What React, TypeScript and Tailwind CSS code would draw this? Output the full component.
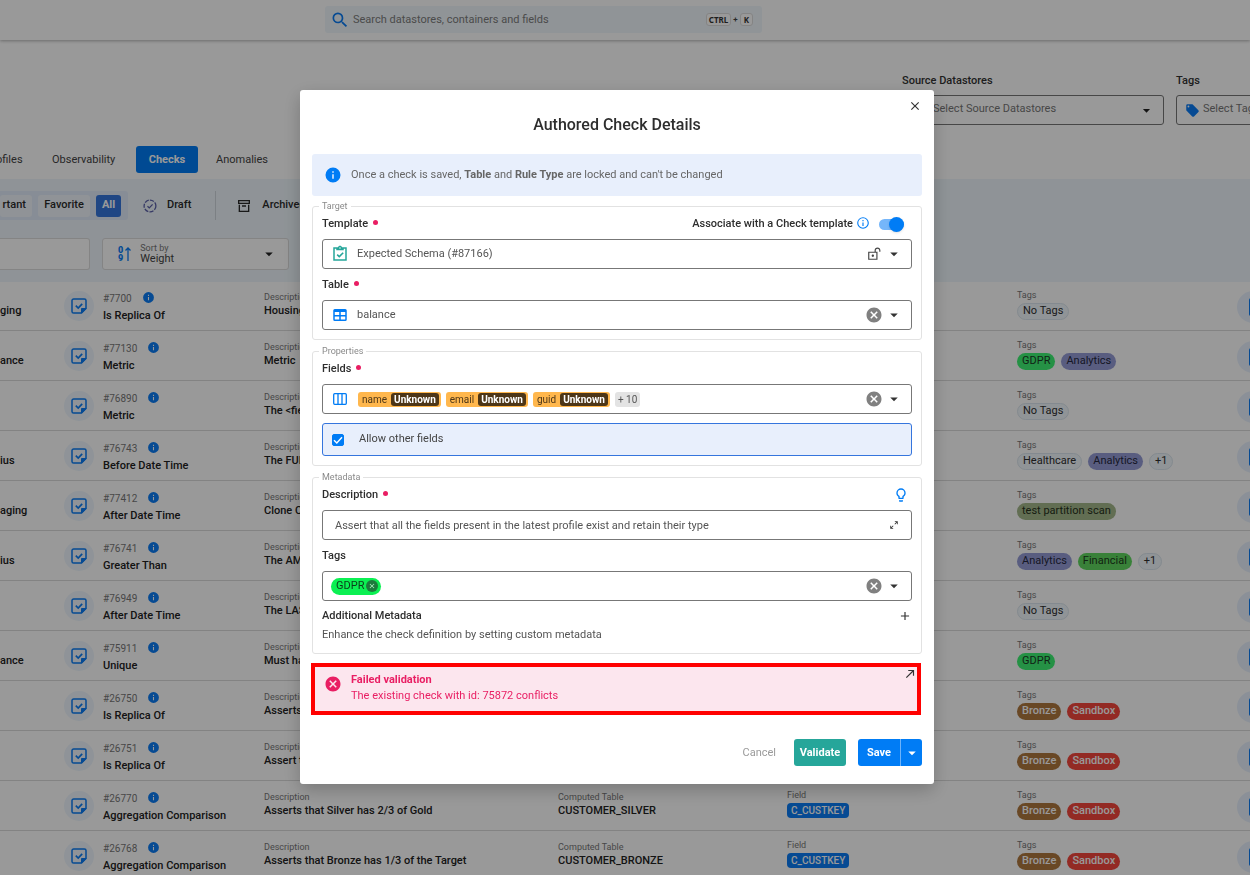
import React, { useState } from "react";

const paths = {
  caret: "M7,10L12,15L17,10H7Z",
  magnify:
    "M9.5,3A6.5,6.5 0 0,1 16,9.5C16,11.11 15.41,12.59 14.44,13.73L14.71,14H15.5L20.5,19L19,20.5L14,15.5V14.71L13.73,14.44C12.59,15.41 11.11,16 9.5,16A6.5,6.5 0 0,1 3,9.5A6.5,6.5 0 0,1 9.5,3M9.5,5C7,5 5,7 5,9.5C5,12 7,14 9.5,14C12,14 14,12 14,9.5C14,7 12,5 9.5,5Z",
  info: "M13,9H11V7H13M13,17H11V11H13M12,2A10,10 0 0,0 2,12A10,10 0 0,0 12,22A10,10 0 0,0 22,12A10,10 0 0,0 12,2Z",
  infoOutline:
    "M11,9H13V7H11M12,20C7.59,20 4,16.41 4,12C4,7.59 7.59,4 12,4C16.41,4 20,7.59 20,12C20,16.41 16.41,20 12,20M12,2A10,10 0 0,0 2,12A10,10 0 0,0 12,22A10,10 0 0,0 22,12A10,10 0 0,0 12,2M11,17H13V11H11V17Z",
  close:
    "M19,6.41L17.59,5L12,10.59L6.41,5L5,6.41L10.59,12L5,17.59L6.41,19L12,13.41L17.59,19L19,17.59L13.41,12L19,6.41Z",
  closeCircle:
    "M12,2C17.53,2 22,6.47 22,12C22,17.53 17.53,22 12,22C6.47,22 2,17.53 2,12C2,6.47 6.47,2 12,2M15.59,7L12,10.59L8.41,7L7,8.41L10.59,12L7,15.59L8.41,17L12,13.41L15.59,17L17,15.59L13.41,12L17,8.41L15.59,7Z",
  table:
    "M5,4H19A2,2 0 0,1 21,6V18A2,2 0 0,1 19,20H5A2,2 0 0,1 3,18V6A2,2 0 0,1 5,4M5,8V12H11V8H5M13,8V12H19V8H13M5,14V18H11V14H5M13,14V18H19V14H13Z",
  lockOpen:
    "M18 1C15.24 1 13 3.24 13 6V8H2V22H18V8H15V6C15 4.34 16.34 3 18 3C19.66 3 21 4.34 21 6V8H23V6C23 3.24 20.76 1 18 1M10 13C11.1 13 12 13.89 12 15C12 16.11 11.11 17 10 17C8.9 17 8 16.11 8 15C8 13.9 8.9 13 10 13M16 10V20H4V10H16Z",
  clipboard:
    "M21,3H14.82C14.4,1.84 13.3,1 12,1C10.7,1 9.6,1.84 9.18,3H3V21H21V3M12,3A1,1 0 0,1 13,4A1,1 0 0,1 12,5A1,1 0 0,1 11,4A1,1 0 0,1 12,3M7,7H17V5H19V19H5V5H7V7M7.5,13.5L9,12L11,14L15.5,9.5L17,11L11,17L7.5,13.5Z",
  bulb: "M12,2A7,7 0 0,1 19,9C19,11.38 17.81,13.47 16,14.74V17A1,1 0 0,1 15,18H9A1,1 0 0,1 8,17V14.74C6.19,13.47 5,11.38 5,9A7,7 0 0,1 12,2M9,21V20H15V21A1,1 0 0,1 14,22H10A1,1 0 0,1 9,21M12,4A5,5 0 0,0 7,9C7,11.05 8.23,12.81 10,13.58V16H14V13.58C15.77,12.81 17,11.05 17,9A5,5 0 0,0 12,4Z",
  plus: "M19,13H13V19H11V13H5V11H11V5H13V11H19V13Z",
  expand:
    "M10,21V19H6.41L10.91,14.5L9.5,13.09L5,17.59V14H3V21H10M14.5,10.91L19,6.41V10H21V3H14V5H17.59L13.09,9.5L14.5,10.91Z",
  arrowTopRight: "M5,17.59L15.59,7H9V5H19V15H17V8.41L6.41,19L5,17.59Z",
  archive:
    "M20 21H4V10H6V19H18V10H20V21M3 3H21V9H3V3M9.5 11H14.5C14.78 11 15 11.22 15 11.5V13H9V11.5C9 11.22 9.22 11 9.5 11M5 5V7H19V5H5Z",
  tag: "M5.5,7A1.5,1.5 0 0,1 4,5.5A1.5,1.5 0 0,1 5.5,4A1.5,1.5 0 0,1 7,5.5A1.5,1.5 0 0,1 5.5,7M21.41,11.58L12.41,2.58C12.05,2.22 11.55,2 11,2H4C2.89,2 2,2.89 2,4V11C2,11.55 2.22,12.05 2.59,12.41L11.58,21.41C11.95,21.77 12.45,22 13,22C13.55,22 14.05,21.77 14.41,21.41L21.41,14.41C21.78,14.05 22,13.55 22,13C22,12.44 21.77,11.94 21.41,11.58Z",
};

function Icon({ name, className }: { name: keyof typeof paths; className: string }) {
  return (
    <svg viewBox="0 0 24 24" fill="currentColor" aria-hidden="true" className={`shrink-0 ${className}`}>
      <path d={paths[name]} />
    </svg>
  );
}

function CheckNoteIcon() {
  return (
    <svg viewBox="0 0 16 16" fill="none" stroke="currentColor" strokeWidth="1.5" aria-hidden="true" className="size-4">
      <path d="M10.5 15H2.6A1.6 1.6 0 0 1 1 13.4V2.6A1.6 1.6 0 0 1 2.6 1H13.4A1.6 1.6 0 0 1 15 2.6V10.5Z" />
      <path d="M10.5 15V10.5H15Z" fill="currentColor" strokeWidth="1" />
      <path d="M4.8 7.7L7.2 10L11.2 5.8" strokeWidth="1.7" />
    </svg>
  );
}

function ColumnsIcon() {
  return (
    <svg viewBox="0 0 14 12" fill="none" stroke="currentColor" strokeWidth="1.3" aria-hidden="true" className="h-3 w-3.5 shrink-0">
      <rect x="0.7" y="0.7" width="12.6" height="10.6" rx="1" />
      <path d="M5 1V11M9 1V11" />
    </svg>
  );
}

function DraftIcon() {
  return (
    <svg viewBox="0 0 14 14" fill="none" stroke="currentColor" strokeWidth="1.3" aria-hidden="true" className="size-3.5">
      <circle cx="7" cy="7" r="5.9" strokeDasharray="4.2 1.2" />
      <path d="M4.5 7.2L6.3 8.9L9.6 5.4" />
    </svg>
  );
}

type Tag = { text: string; tone: "plain" | "green" | "indigo" | "olive" | "grass" | "bronze" | "red" };

const tones: Record<Tag["tone"], string> = {
  plain: "border border-[#dbe5ee] bg-[#f1f7fc] text-[#2e2e2e]",
  green: "bg-[#3ef273] text-[#1c3a26]",
  indigo: "bg-[#959cd6] text-[#26283f]",
  olive: "bg-[#a3b78a] text-[#26301c]",
  grass: "bg-[#5fd85f] text-[#1d3a1d]",
  bronze: "bg-[#b0783f] font-medium text-white",
  red: "bg-[#f5473c] font-medium text-white",
};

type Row = { owner: string; id: string; name: string; description: string; table?: string; tags: Tag[] };

const noTags: Tag[] = [{ text: "No Tags", tone: "plain" }];
const medals: Tag[] = [
  { text: "Bronze", tone: "bronze" },
  { text: "Sandbox", tone: "red" },
];

const rows: Row[] = [
  { owner: "ging", id: "#7700", name: "Is Replica Of", description: "Housing", tags: noTags },
  {
    owner: "ance", id: "#77130", name: "Metric", description: "Metric",
    tags: [{ text: "GDPR", tone: "green" }, { text: "Analytics", tone: "indigo" }],
  },
  { owner: "", id: "#76890", name: "Metric", description: "The <field>", tags: noTags },
  {
    owner: "ius", id: "#76743", name: "Before Date Time", description: "The FUND",
    tags: [{ text: "Healthcare", tone: "plain" }, { text: "Analytics", tone: "indigo" }, { text: "+1", tone: "plain" }],
  },
  {
    owner: "aging", id: "#77412", name: "After Date Time", description: "Clone C",
    tags: [{ text: "test partition scan", tone: "olive" }],
  },
  {
    owner: "ius", id: "#76741", name: "Greater Than", description: "The AMOUNT",
    tags: [{ text: "Analytics", tone: "indigo" }, { text: "Financial", tone: "grass" }, { text: "+1", tone: "plain" }],
  },
  { owner: "", id: "#76949", name: "After Date Time", description: "The LAST", tags: noTags },
  { owner: "ance", id: "#75911", name: "Unique", description: "Must have", tags: [{ text: "GDPR", tone: "green" }] },
  { owner: "", id: "#26750", name: "Is Replica Of", description: "Asserts", tags: medals },
  { owner: "", id: "#26751", name: "Is Replica Of", description: "Assert t", tags: medals },
  {
    owner: "", id: "#26770", name: "Aggregation Comparison", description: "Asserts that Silver has 2/3 of Gold",
    table: "CUSTOMER_SILVER", tags: medals,
  },
  {
    owner: "", id: "#26768", name: "Aggregation Comparison", description: "Asserts that Bronze has 1/3 of the Target",
    table: "CUSTOMER_BRONZE", tags: medals,
  },
];

function Cell({ label, children }: { label: string; children: React.ReactNode }) {
  return (
    <div className="flex min-w-0 flex-col pt-2.5">
      <span className="text-[9px] leading-3 text-[#777]">{label}</span>
      <div className="text-[11px] leading-4 font-medium whitespace-nowrap text-[#222]">{children}</div>
    </div>
  );
}

function CheckRow({ row }: { row: Row }) {
  return (
    <li className="grid h-[50px] grid-cols-[64px_39px_161px_294px_229px_230px_220px_40px] border-b border-[#dadada]">
      <div className="overflow-hidden pt-[22px] text-[11px] leading-4 font-medium text-[#222]">{row.owner}</div>
      <div className="mt-2.5 flex size-[30px] items-center justify-center rounded-full bg-[#eef6fd] text-[#0a7cf5]">
        <CheckNoteIcon />
      </div>
      <div className="pt-2.5 whitespace-nowrap">
        <div className="flex items-start gap-2.5 text-[#777]">
          <span className="pt-0.5 text-[10px] leading-3">{row.id}</span>
          <Icon name="info" className="size-[13px] text-[#0a7cf5]" />
        </div>
        <div className="pt-[3px] text-[11px] leading-4 font-medium text-[#222]">{row.name}</div>
      </div>
      <Cell label="Description">{row.description}</Cell>
      {row.table ? <Cell label="Computed Table">{row.table}</Cell> : <div />}
      {row.table ? (
        <div className="flex flex-col items-start pt-2">
          <span className="text-[9px] leading-3 text-[#777]">Field</span>
          <span className="mt-0.5 rounded-sm bg-[#0a7cf5] px-1 text-[10px] leading-[15px] font-medium text-white">C_CUSTKEY</span>
        </div>
      ) : (
        <div />
      )}
      <div className="flex flex-col pt-2">
        <span className="text-[9px] leading-3 text-[#777]">Tags</span>
        <div className="mt-0.5 flex gap-1.5">
          {row.tags.map((t) => (
            <span
              key={t.text}
              className={`flex h-[17px] items-center rounded-full px-[5px] text-[11px] whitespace-nowrap ${tones[t.tone]}`}
            >
              {t.text}
            </span>
          ))}
        </div>
      </div>
      <button aria-label={`Open ${row.id}`} className="mt-2.5 flex size-8 items-center justify-center rounded-full bg-[#e8f1fd] text-[#0a7cf5]">
        <span className="h-[18px] w-2 rounded-l-xs bg-[#0a7cf5]" />
      </button>
    </li>
  );
}

function FilterSelect({ id, label, placeholder, tag }: { id: string; label: string; placeholder: string; tag?: boolean }) {
  return (
    <div className="w-[262px] shrink-0">
      <label htmlFor={id} className="block pt-px text-[11px] leading-4 font-medium text-[#333]">
        {label}
      </label>
      <div className="mt-1.5 flex h-[30px] items-center rounded-[3px] border border-[#777] pr-2">
        <Icon name={tag ? "tag" : "table"} className="ml-2 size-[15px] text-[#0a7cf5]" />
        <select id={id} className={`h-full flex-1 appearance-none bg-transparent pb-0.5 text-[11px] text-[#777] ${tag ? "ml-[3px]" : "ml-[7px]"}`}>
          <option>{placeholder}</option>
        </select>
        <Icon name="caret" className="size-[17px] text-[#222]" />
      </div>
    </div>
  );
}

function Page() {
  return (
    <div className="h-full overflow-hidden bg-white" aria-hidden="true">
      <header className="relative flex h-10 pt-1.5 pl-[325px] shadow-[0_1px_3px_rgba(0,0,0,0.3)]">
        <div className="flex h-[27px] w-[437px] items-center rounded-[3px] bg-[#f0f7fc] pr-[9px] pl-[5px]">
          <Icon name="magnify" className="size-5 text-[#0a7cf5]" />
          <input
            type="search"
            aria-label="Search"
            placeholder="Search datastores, containers and fields"
            className="ml-[3px] flex-1 bg-transparent pt-px text-[11px] placeholder:text-[#7d7d7d]"
          />
          <kbd className="rounded-[3px] border border-[#ddd] bg-white px-0.5 font-['Noto_Sans',sans-serif] text-[8px] leading-[11px] font-bold text-[#333]">CTRL</kbd>
          <span className="px-[2px] text-[8px] font-bold text-[#444]">+</span>
          <kbd className="rounded-[3px] border border-[#ddd] bg-white px-[3px] font-['Noto_Sans',sans-serif] text-[8px] leading-[11px] font-bold text-[#333]">K</kbd>
        </div>
      </header>

      <div className="flex gap-3 pt-8 pl-[902px]">
        <FilterSelect id="stores" label="Source Datastores" placeholder="Select Source Datastores" />
        <FilterSelect id="tags-filter" label="Tags" placeholder="Select Tags" tag />
      </div>

      <nav className="mt-[21px] flex h-[27px] items-center text-[11px] leading-4 text-[#444]">
        <a href="#profiles" className="-ml-1 w-14">ofiles</a>
        <a href="#observability" className="w-[84px]">Observability</a>
        <a href="#checks" className="flex h-full w-[62px] items-center justify-center rounded-[3px] bg-[#007cf5] font-bold text-white">Checks</a>
        <a href="#anomalies" className="ml-[18px]">Anomalies</a>
      </nav>

      <section className="mt-1.5 h-[103px] bg-[#eef6fc] pt-3">
        <div className="flex h-[29px] items-center text-[11px] font-medium text-[#2b2b2b]">
          <div className="flex h-full w-32 items-center gap-1.5 rounded-r-[3px] bg-[#e2ebfa]">
            <button className="flex h-[22px] w-8 items-center justify-end rounded-[3px] bg-[#f0f6fc] pr-1.5">rtant</button>
            <button className="h-[22px] w-[52px] rounded-[3px] bg-[#f0f6fc]">Favorite</button>
            <button className="h-[22px] w-[25px] rounded-[3px] bg-[#3575dd] font-bold text-white">All</button>
          </div>
          <button className="ml-[15px] flex items-center gap-2.5">
            <span className="text-[#5b5fa8]"><DraftIcon /></span>
            Draft
          </button>
          <span className="ml-6 h-full w-px bg-[#cfd6dc]" />
          <button className="ml-5 flex items-center gap-2.5">
            <Icon name="archive" className="size-4" />
            Archived
          </button>
        </div>
        <div className="mt-[18px] flex gap-3">
          <div className="h-8 w-[90px] rounded-r-[3px] border border-l-0 border-[#dcdcdc] bg-white" />
          <div className="flex h-8 w-[187px] items-center rounded-[3px] border border-[#dcdcdc] bg-white pr-2.5 pl-[15px] text-[#0a7cf5]">
            <span className="flex flex-col text-[9px] leading-2 font-black">
              <span>0</span>
              <span>9</span>
            </span>
            <svg viewBox="0 0 6 14" fill="none" stroke="currentColor" strokeWidth="1.3" className="ml-0.5 h-3.5 w-1.5">
              <path d="M3 14V1M0.5 3.5L3 1L5.5 3.5" />
            </svg>
            <div className="ml-[9px] flex flex-1 flex-col">
              <label htmlFor="sort" className="text-[9px] leading-[10px] text-[#777]">Sort by</label>
              <select id="sort" className="h-3 appearance-none bg-transparent text-[11px] leading-3 text-[#444]">
                <option>Weight</option>
              </select>
            </div>
            <Icon name="caret" className="size-[18px] text-[#222]" />
          </div>
        </div>
      </section>

      <ul className="-mt-px">
        {rows.map((r) => (
          <CheckRow key={r.id} row={r} />
        ))}
      </ul>
    </div>
  );
}

function FieldLabel({ htmlFor, children, required }: { htmlFor: string; children: React.ReactNode; required?: boolean }) {
  return (
    <label htmlFor={htmlFor} className="flex h-5 items-center gap-[5px] pt-px text-[11px] font-medium text-[#2e2e2e]">
      {children}
      {required && <span className="mb-1 size-[5px] rounded-full bg-[#e91e63]" />}
    </label>
  );
}

const boxClass = "flex h-[30px] items-center rounded-[3px] border border-[#777] bg-white";
const groupClass = "rounded-[3px] border border-[#e2e2e2] px-[9px] pb-[9px]";
const legendClass = "-ml-[3px] px-[3px] text-[9px] leading-[15px] text-[#8a8a8a]";

function Trailing({ clearLabel, children }: { clearLabel?: string; children?: React.ReactNode }) {
  return (
    <div className="flex items-center gap-0.5 pr-2">
      {clearLabel && (
        <button aria-label={clearLabel} className="text-[#808080]">
          <Icon name="closeCircle" className="size-[18px]" />
        </button>
      )}
      {children}
      <Icon name="caret" className="size-[18px] text-[#333]" />
    </div>
  );
}

function FieldChip({ name }: { name: string }) {
  return (
    <span className="flex h-[15px] items-center gap-1 rounded-[3px] bg-[#ffb74d] pr-0.5 pl-1 text-[10px] text-[#4d3617]">
      {name}
      <span className="flex h-[13px] items-center rounded-[3px] bg-[#4d3617] px-[3px] font-bold text-white">Unknown</span>
    </span>
  );
}

function Dialog() {
  const [associated, setAssociated] = useState(true);
  const [allowOther, setAllowOther] = useState(true);
  return (
    <div
      role="dialog"
      aria-labelledby="dialog-title"
      className="flex w-[634px] flex-col rounded-[3px] bg-white px-3 pb-[18px] shadow-[0_6px_18px_rgba(0,0,0,0.22)]"
    >
      <div className="flex h-6 items-end justify-end">
        <button aria-label="Close" className="pb-px text-[#333]">
          <Icon name="close" className="size-3.5" />
        </button>
      </div>
      <h2 id="dialog-title" className="text-center text-base leading-[22px] font-medium text-[#2e2e2e]">
        Authored Check Details
      </h2>

      <div className="mt-[18px] flex h-[42px] items-center gap-[9px] rounded-[3px] bg-[#e8effc] px-3 text-[11px] text-[#666]">
        <Icon name="info" className="size-[18px] text-[#007cf5]" />
        <p>
          Once a check is saved, <b>Table</b> and <b>Rule Type</b> are locked and can't be changed
        </p>
      </div>

      <fieldset className={`mt-[3px] ${groupClass}`}>
        <legend className={legendClass}>Target</legend>
        <div className="flex items-center justify-between">
          <FieldLabel htmlFor="template" required>Template</FieldLabel>
          <div className="flex items-center pr-2">
            <label htmlFor="associate" className="text-[11px] font-medium text-[#2e2e2e]">Associate with a Check template</label>
            <Icon name="infoOutline" className="mb-0.5 ml-[3px] size-3.5 text-[#007cf5]" />
            <span className="relative ml-[9px] flex h-[15px] w-[25px] items-center">
              <input
                id="associate"
                type="checkbox"
                role="switch"
                checked={associated}
                onChange={() => setAssociated(!associated)}
                className="peer h-[11px] w-full appearance-none rounded-full bg-[#bbb] checked:bg-[#75b6fa]"
              />
              <span className="pointer-events-none absolute left-0 size-[15px] rounded-full bg-[#eee] shadow peer-checked:left-2.5 peer-checked:bg-[#007cf5]" />
            </span>
          </div>
        </div>
        <div className={`mt-[5px] ${boxClass}`}>
          <Icon name="clipboard" className="ml-2 size-[18px] text-[#26a69a]" />
          <select id="template" className="ml-2 h-full flex-1 appearance-none pt-px text-[11px] text-[#555]">
            <option>Expected Schema (#87166)</option>
          </select>
          <Trailing>
            <button aria-label="Unlock template" className="pr-0.5 text-[#444]">
              <Icon name="lockOpen" className="size-3.5" />
            </button>
          </Trailing>
        </div>
        <div className="mt-1.5">
          <FieldLabel htmlFor="table" required>Table</FieldLabel>
        </div>
        <div className={`mt-[5px] ${boxClass}`}>
          <Icon name="table" className="ml-2 size-[18px] text-[#007cf5]" />
          <select id="table" className="ml-2 h-full flex-1 appearance-none pt-px text-[11px] text-[#555]">
            <option>balance</option>
          </select>
          <Trailing clearLabel="Clear table" />
        </div>
      </fieldset>

      <fieldset className={`mt-1 ${groupClass}`}>
        <legend className={legendClass}>Properties</legend>
        <FieldLabel htmlFor="fields" required>Fields</FieldLabel>
        <div className={`mt-[5px] ${boxClass}`}>
          <button id="fields" aria-haspopup="listbox" className="flex h-full flex-1 items-center pl-2.5 text-[#007cf5]">
            <ColumnsIcon />
            <span className="ml-[11px] flex gap-[5px]">
              <FieldChip name="name" />
              <FieldChip name="email" />
              <FieldChip name="guid" />
              <span className="flex h-[15px] items-center rounded-[3px] bg-[#e3e3e3] px-[3px] text-[10px] text-[#555]">+ 10</span>
            </span>
          </button>
          <Trailing clearLabel="Clear fields" />
        </div>
        <label className="mt-[9px] flex h-[33px] items-center rounded-[3px] border border-[#3575dd] bg-[#e8effc] pl-[9px] text-[11px] text-[#444]">
          <span className="relative flex size-3">
            <input
              type="checkbox"
              checked={allowOther}
              onChange={() => setAllowOther(!allowOther)}
              className="size-3 appearance-none rounded-xs border border-[#007cf5] checked:bg-[#007cf5]"
            />
            {allowOther && (
              <svg viewBox="0 0 12 12" fill="none" stroke="white" strokeWidth="1.4" className="pointer-events-none absolute inset-0">
                <path d="M2 6.2L4.8 9L10 3.3" />
              </svg>
            )}
          </span>
          <span className="ml-[15px]">Allow other fields</span>
        </label>
      </fieldset>

      <fieldset className={`mt-1 ${groupClass}`}>
        <legend className={legendClass}>Metadata</legend>
        <div className="flex items-center justify-between pr-[3px]">
          <FieldLabel htmlFor="description" required>Description</FieldLabel>
          <button aria-label="Suggest description" className="text-[#007cf5]">
            <Icon name="bulb" className="size-4" />
          </button>
        </div>
        <div className={`mt-[5px] ${boxClass}`}>
          <input
            id="description"
            defaultValue="Assert that all the fields present in the latest profile exist and retain their type"
            className="ml-3 h-full flex-1 text-[11px] text-[#555]"
          />
          <button aria-label="Expand" className="mr-3 text-[#333]">
            <Icon name="expand" className="size-2.5" />
          </button>
        </div>
        <div className="mt-1.5">
          <FieldLabel htmlFor="tags">Tags</FieldLabel>
        </div>
        <div className={`mt-[5px] ${boxClass}`}>
          <div className="flex h-full flex-1 items-center pl-2">
            <span className="flex h-[17px] items-center gap-0.5 rounded-full bg-[#0bf052] pr-[3px] pl-[5px] text-[11px] text-[#0d3a1b]">
              GDPR
              <button aria-label="Remove GDPR" className="flex size-3 items-center justify-center rounded-full bg-[#1d7a3c] text-[#b5f5c8]">
                <Icon name="close" className="size-2" />
              </button>
            </span>
            <input id="tags" className="h-full min-w-0 flex-1" />
          </div>
          <Trailing clearLabel="Clear tags" />
        </div>
        <div className="mt-[5px] flex h-5 items-center justify-between text-[11px] font-medium text-[#2e2e2e]">
          <h3 className="pt-px">Additional Metadata</h3>
          <button aria-label="Add metadata" className="text-[#333]">
            <Icon name="plus" className="size-3.5" />
          </button>
        </div>
        <p className="text-[11px] leading-[18px] text-[#555]">Enhance the check definition by setting custom metadata</p>
      </fieldset>

      <div role="alert" className="mt-[9px] mr-px -ml-px flex h-[52px] border-4 border-[#ff0000] bg-[#fce6ee] pl-[9px] text-[11px] leading-4 text-[#e91e63]">
        <Icon name="closeCircle" className="mt-2 size-[18px]" />
        <div className="ml-[9px] flex-1 pt-[5px]">
          <p className="font-bold">Failed validation</p>
          <p>The existing check with id: 75872 conflicts</p>
        </div>
        <a href="#conflict" aria-label="Open conflicting check" className="text-[#333]">
          <Icon name="arrowTopRight" className="size-3.5" />
        </a>
      </div>

      <div className="mt-6 flex h-[27px] justify-end text-[11px]">
        <button className="mr-[18px] pt-0.5 text-[#9a9a9a]">Cancel</button>
        <button className="mr-3 w-[52px] rounded-[3px] bg-[#26a69a] pt-0.5 font-bold text-white">Validate</button>
        <button className="w-[42px] rounded-l-[3px] bg-[#007cf5] pt-0.5 font-bold text-white">Save</button>
        <button aria-label="More save options" className="flex w-[22px] items-center justify-center rounded-r-[3px] border-l border-[#6db3fa] bg-[#007cf5] text-white">
          <Icon name="caret" className="size-[18px]" />
        </button>
      </div>
    </div>
  );
}

export default function App() {
  return (
    <div className="h-screen overflow-hidden font-['Roboto',sans-serif]">
      <Page />
      <div className="fixed inset-0 flex items-center justify-center bg-black/40 pr-4 pb-px">
        <Dialog />
      </div>
    </div>
  );
}
